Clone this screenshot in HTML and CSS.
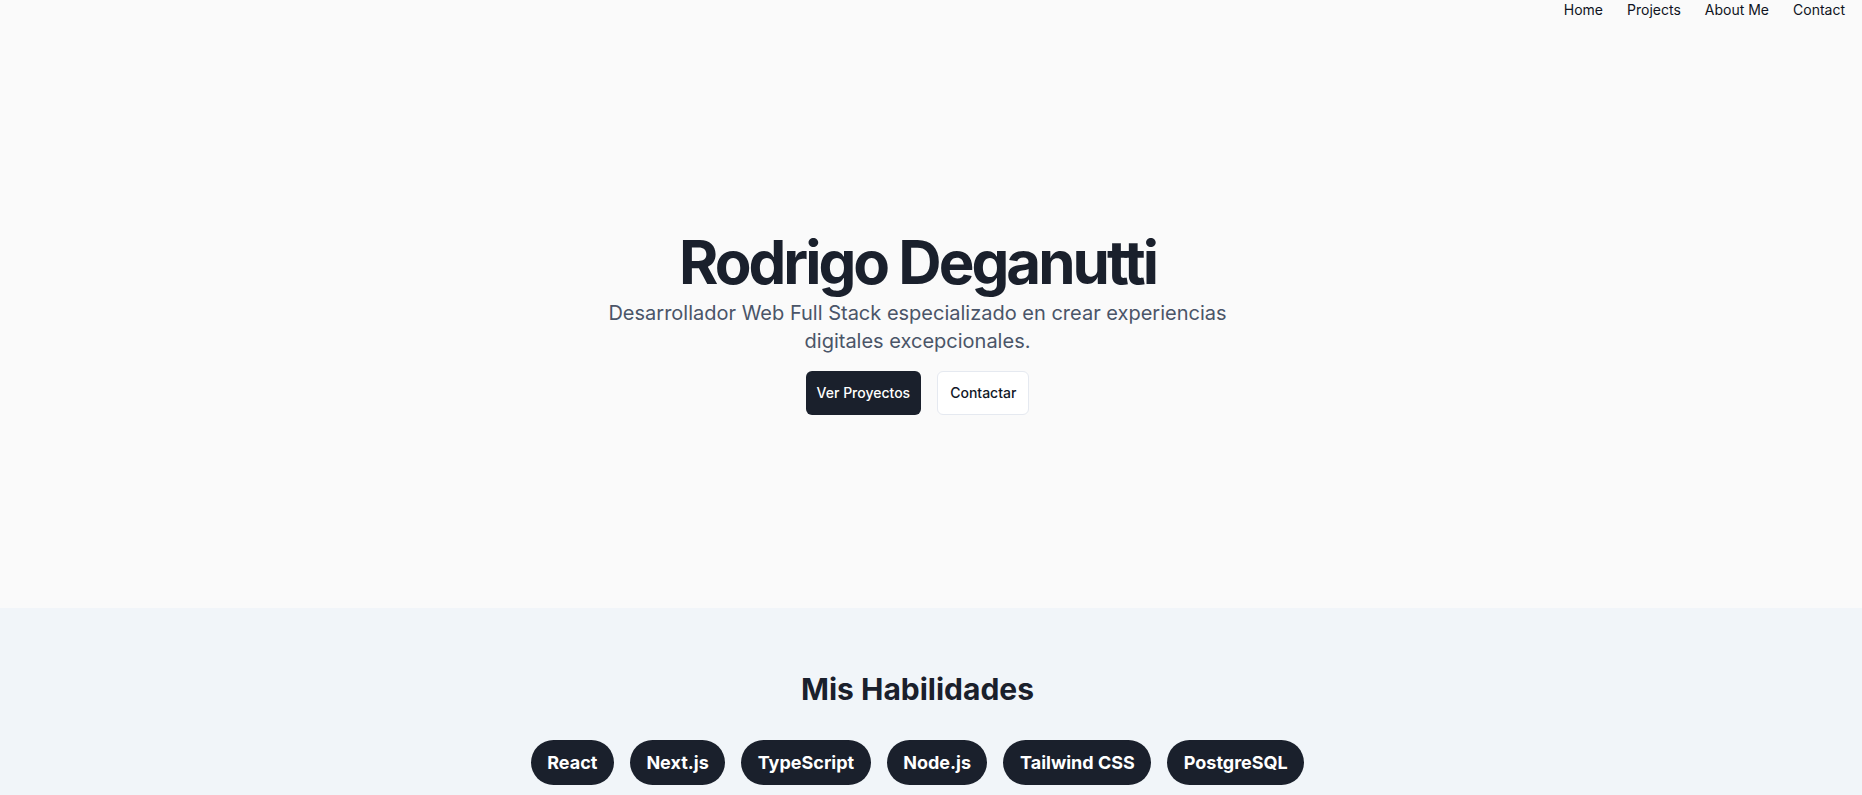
FILE: index.html
```html
<!DOCTYPE html>
<html lang="es">
<head>
<meta charset="utf-8">
<title>Rodrigo Deganutti</title>
<link rel="stylesheet" href="styles.css">
</head>
<body>
<header class="site-header">
  <nav class="nav">
    <a href="#" class="nav-link">Home</a>
    <a href="#" class="nav-link">Projects</a>
    <a href="#" class="nav-link">About Me</a>
    <a href="#" class="nav-link">Contact</a>
  </nav>
</header>
<main class="main">
  <section class="hero">
    <div class="hero-inner">
      <h1 class="hero-title">Rodrigo Deganutti</h1>
      <p class="hero-subtitle">Desarrollador Web Full Stack especializado en crear experiencias digitales excepcionales.</p>
      <div class="hero-actions">
        <a href="#" class="btn btn-primary">Ver Proyectos</a>
        <a href="#" class="btn btn-outline">Contactar</a>
      </div>
    </div>
  </section>
  <section class="skills">
    <h2 class="skills-title">Mis Habilidades</h2>
    <ul class="skills-list">
      <li class="skill">React</li>
      <li class="skill">Next.js</li>
      <li class="skill">TypeScript</li>
      <li class="skill">Node.js</li>
      <li class="skill">Tailwind CSS</li>
      <li class="skill">PostgreSQL</li>
    </ul>
  </section>
</main>
</body>
</html>
```
FILE: styles.css
```css
* { box-sizing: border-box; }
html, body { margin: 0; padding: 0; }
body {
  font-family: Inter, "Noto Sans", sans-serif;
  background: #fafafa;
  color: #1a202c;
}
.site-header {
  height: 39px;
  display: flex;
  justify-content: flex-end;
  padding: 0 17px 0 0;
}
.nav {
  display: flex;
  gap: 24px;
  align-items: flex-start;
}
.nav-link {
  font-size: 14px;
  line-height: 20px;
  color: #0f1422;
  text-decoration: none;
}
.hero {
  min-height: 569px;
  padding-right: 27px;
  display: flex;
  align-items: center;
  justify-content: center;
}
.hero-inner {
  display: flex;
  flex-direction: column;
  align-items: center;
  text-align: center;
}
.hero-title {
  margin: 0;
  font-size: 60px;
  line-height: 60px;
  font-weight: 700;
  letter-spacing: -0.05em;
  color: #1a202c;
}
.hero-subtitle {
  margin: 7px 0 0;
  max-width: 672px;
  font-size: 20px;
  line-height: 28px;
  color: #4a5568;
}
.hero-actions {
  margin-top: 16px;
  display: flex;
  gap: 16px;
}
.btn {
  display: inline-block;
  font-size: 14px;
  line-height: 20px;
  font-weight: 500;
  border-radius: 6px;
  text-decoration: none;
}
.btn-primary {
  padding: 12px 11px;
  background: #1a202c;
  color: #ffffff;
}
.btn-outline {
  padding: 11px 12px;
  background: #ffffff;
  border: 1px solid #e5e9f0;
  color: #111827;
}
.skills {
  background: #f1f5f9;
  padding: 63px 27px 64px 0;
  display: flex;
  flex-direction: column;
  align-items: center;
}
.skills-title {
  margin: 0 0 33px;
  font-size: 30px;
  line-height: 36px;
  font-weight: 700;
  color: #1a202c;
}
.skills-list {
  list-style: none;
  margin: 0;
  padding: 0;
  display: flex;
  flex-wrap: wrap;
  justify-content: center;
  gap: 16px;
}
.skill {
  background: #1a202c;
  color: #ffffff;
  font-size: 18px;
  line-height: 29px;
  font-weight: 700;
  padding: 8px 16.5px;
  border-radius: 9999px;
}
```
